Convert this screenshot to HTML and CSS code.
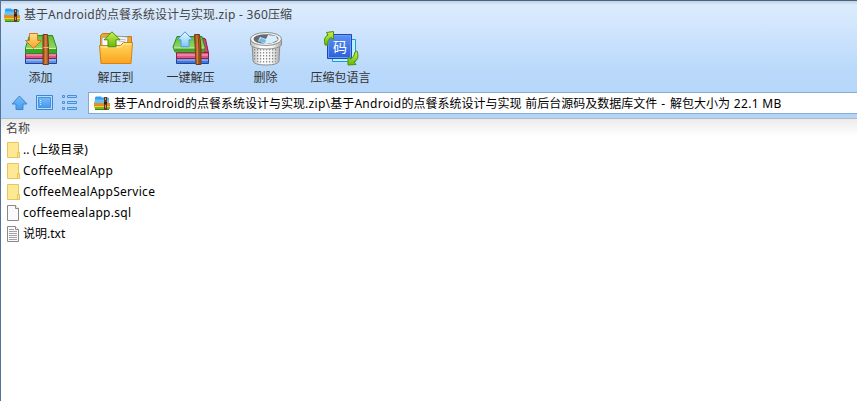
FILE: index.html
```html
<!DOCTYPE html>
<html lang="zh-CN">
<head>
    <meta charset="UTF-8">
    <title>360压缩</title>
    <link rel="stylesheet" href="styles.css">
</head>
<body>
    <svg class="defs" width="0" height="0">
        <defs>
            <linearGradient id="orange" x1="0" y1="0" x2="0" y2="1">
                <stop offset="0" stop-color="#ffe08a"/><stop offset="1" stop-color="#fba030"/>
            </linearGradient>
            <linearGradient id="folder" x1="0" y1="0" x2="0" y2="1">
                <stop offset="0" stop-color="#ffd95c"/><stop offset="1" stop-color="#fba31e"/>
            </linearGradient>
            <linearGradient id="green" x1="0" y1="0" x2="0" y2="1">
                <stop offset="0" stop-color="#5fbf35"/><stop offset="1" stop-color="#a5e07c"/>
            </linearGradient>
            <linearGradient id="lime" x1="0" y1="0" x2="0" y2="1">
                <stop offset="0" stop-color="#d0f04e"/><stop offset="1" stop-color="#64b80b"/>
            </linearGradient>
            <linearGradient id="belt" x1="0" y1="0" x2="1" y2="0">
                <stop offset="0" stop-color="#8a4517"/><stop offset=".5" stop-color="#d98643"/><stop offset="1" stop-color="#8a4517"/>
            </linearGradient>
            <linearGradient id="sky" x1="0" y1="0" x2="0" y2="1">
                <stop offset="0" stop-color="#e8f9ff"/><stop offset="1" stop-color="#7cc6fb"/>
            </linearGradient>
            <linearGradient id="blue" x1="0" y1="0" x2="0" y2="1">
                <stop offset="0" stop-color="#5b94f4"/><stop offset="1" stop-color="#2a5edb"/>
            </linearGradient>
            <linearGradient id="nav" x1="0" y1="0" x2="0" y2="1">
                <stop offset="0" stop-color="#73bdfb"/><stop offset="1" stop-color="#4a9aea"/>
            </linearGradient>
            <linearGradient id="metal" x1="0" y1="0" x2="1" y2="0">
                <stop offset="0" stop-color="#b8b8b8"/><stop offset=".35" stop-color="#ffffff"/><stop offset=".7" stop-color="#f4f4f4"/><stop offset="1" stop-color="#aaaaaa"/>
            </linearGradient>
            <pattern id="holes" width="3" height="3" patternUnits="userSpaceOnUse">
                <rect width="1.2" height="1.5" fill="#8a8a8a"/>
            </pattern>
            <symbol id="zip" viewBox="0 0 16 14">
                <path d="M1 3V1.5L2 .5h5l1 1h6l1 1V6H1z" fill="#35a3ec"/>
                <path d="M1 3.500h14V7H0z" fill="#62c4fa"/>
                <path d="M0 7h16v3.500H0z" fill="#f08a1c"/>
                <path d="M0 10.500h16V13H1z" fill="#6dbd24"/>
                <path d="M0 10h16v1H0z" fill="#f9c93d"/>
                <path d="M1 13h14v1H1z" fill="#3d8111"/>
                <path d="M10 1h3v13h-3z" fill="#69351f"/>
                <path d="M11 2h1v2h-1zm0 7h1v3h-1z" fill="#c79570"/>
                <path d="M10 6h3v2h-3z" fill="#352016"/>
            </symbol>
            <symbol id="dir" viewBox="0 0 13 16">
                <path d="M.5.5h11v10h1v5H.5z" fill="#fde893" stroke="#e7c65c"/>
                <path d="M10.500 15v-4.500h2v5h-2z" fill="#fde28a" stroke="#e7c65c"/>
            </symbol>
        </defs>
    </svg>

    <div class="window">
        <div class="chrome">
            <div class="titlebar">
                <svg width="16" height="14"><use href="#zip"/></svg>
                <span class="title">基于<span class="latin">Android</span>的点餐系统设计与实现<span class="latin">.zip - 360</span>压缩</span>
            </div>

            <div class="toolbar">
                <div class="tool">
                    <svg width="36" height="36" viewBox="0 0 36 36">
                        <path d="M2.500 27.500h31v5h-31z" fill="#5a92e6" stroke="#21449a"/>
                        <path d="M3 29h30" stroke="#b9d7ff"/>
                        <path d="M2.500 22.500h31v5h-31z" fill="#dc5482" stroke="#8e1c46"/>
                        <path d="M3 24h30" stroke="#f7b3cb"/>
                        <path d="M6.500 4.500h23l4 12v6h-31v-6z" fill="url(#green)" stroke="#2f8a1e"/>
                        <path d="M3 17h30v5H3z" fill="#3fa428"/>
                        <path d="M3 17.500h30" stroke="#c9f0ae"/>
                        <path d="M20 3.500h4.500l1 12v18h-5.500z" fill="url(#belt)" stroke="#7a3c10"/>
                        <path d="M20.500 16.500h5" stroke="#f0b47c"/>
                        <path d="M6.500 2.500h8v7h4l-8 8-8-8h4z" fill="url(#orange)" stroke="#d17a14"/>
                    </svg>
                    <span>添加</span>
                </div>
                <div class="tool">
                    <svg width="36" height="36" viewBox="0 0 36 36">
                        <path d="M2.500 4.500l2-2h8l2 3h19v13h-31z" fill="#eda42a" stroke="#c57a13"/>
                        <path d="M4 7l12-3 4 12H4z" fill="#fff" stroke="#aaa"/>
                        <path d="M17 5l13 1-1 12H16z" fill="#f7f7f7" stroke="#999"/>
                        <path d="M21 8l7 1M21 10l6 1" stroke="#bbb"/>
                        <path d="M1.500 14.500h21l3-3h9L33 32.500H3z" fill="url(#folder)" stroke="#d58316"/>
                        <path d="M3 16h20l3-3h7" fill="none" stroke="#ffefaa"/>
                        <path d="M14 .8l8 8h-4v7h-8v-7H6z" fill="url(#lime)" stroke="#4a900c"/>
                    </svg>
                    <span>解压到</span>
                </div>
                <div class="tool">
                    <svg width="38" height="36" viewBox="0 0 38 36">
                        <path d="M31 7l2.500 1 3 14v5H30z" fill="#d54471" stroke="#8e1c46"/>
                        <path d="M4.500 27.500h32v5h-32z" fill="#3f78dc" stroke="#21449a"/>
                        <path d="M5 29h31" stroke="#a9ccff"/>
                        <path d="M4.500 21.500h32v6h-32z" fill="#dc5482" stroke="#8e1c46"/>
                        <path d="M5 24h31" stroke="#f7b3cb"/>
                        <path d="M5 5.500h25l3 11-1 4.500H3l-2-5z" fill="url(#green)" stroke="#2f8a1e"/>
                        <path d="M1.500 17h31l-.5 3.500H3z" fill="#3fa428"/>
                        <path d="M2 17h30" stroke="#c9f0ae"/>
                        <path d="M22.500 3.500h5l1.500 13v17h-5z" fill="url(#belt)" stroke="#7a3c10"/>
                        <path d="M26 4l1 13v16" fill="none" stroke="#7a3c10"/>
                        <path d="M13 .8l7.500 8H17v7H9v-7H5.500z" fill="url(#sky)" stroke="#4a9ce8"/>
                    </svg>
                    <span>一键解压</span>
                </div>
                <div class="tool">
                    <svg width="36" height="36" viewBox="0 0 36 36">
                        <path d="M4 10l1 20q1 4 13 4t13-4l1-20z" fill="url(#metal)" stroke="#8d8d8d"/>
                        <path d="M6 16q12 5 24 0v14q-12 5-24 0z" fill="url(#holes)"/>
                        <path d="M2.500 8v6q3 4 15.500 4t15.500-4V8z" fill="url(#metal)" stroke="#8d8d8d"/>
                        <ellipse cx="18" cy="8" rx="15.500" ry="6.500" fill="#f5f5f5" stroke="#8d8d8d"/>
                        <ellipse cx="18" cy="8" rx="12.500" ry="4.800" fill="#626b71"/>
                        <path d="M10 10l2-4 6 2 2-4 8 1 2 4-6 3-7 1z" fill="#d8eefb"/>
                        <path d="M10 10l3-3 5 2-1 3-5-1z" fill="#73bae8"/>
                    </svg>
                    <span>删除</span>
                </div>
                <div class="tool">
                    <svg width="36" height="36" viewBox="0 0 36 36">
                        <path d="M9.500 8.500h23v22h-23z" fill="#c3f0ff" stroke="#129ce8"/>
                        <path d="M4.500 3.500h24v24h-24z" fill="url(#blue)" stroke="#1c49b5"/>
                        <path d="M5.500 4.500h22v22h-22z" fill="none" stroke="#6c9df5"/>
                        <text x="17" y="20.500" class="code-char">码</text>
                        <path d="M2 14Q0 6 5 4L3.500 1.500 10.500.500v8L8 6.500Q4 9 5 14z" fill="url(#lime)" stroke="#4a900c"/>
                        <path d="M34 20q3 8-3 11l2 2.500-8 .5v-8l2.500 2q4-2 4.500-7z" fill="url(#lime)" stroke="#4a900c"/>
                    </svg>
                    <span>压缩包语言</span>
                </div>
            </div>

            <div class="navbar">
                <div class="nav-icons">
                    <svg width="18" height="16" viewBox="0 0 18 16">
                        <path d="M9.500 1l7.500 8H13v5.500H6V9H2z" fill="url(#nav)" stroke="#3a86d6"/>
                    </svg>
                    <svg width="18" height="16" viewBox="0 0 18 16">
                        <path d="M.5.500h16v14H.5z" fill="#b9dcff" stroke="#3a86d6"/>
                        <path d="M2.500 2.500h12v10h-12z" fill="url(#nav)" stroke="#4a90dc"/>
                        <path d="M4 5h1v1H4zm0 2h1v1H4zm0 2h1v1H4z" fill="#d5edff"/>
                    </svg>
                    <svg width="16" height="16" viewBox="0 0 16 16">
                        <path d="M.5.500h2v2h-2zm0 6h2v2h-2zm0 6h2v2h-2zM5.500.500h9v2h-9zm0 6h9v2h-9zm0 6h9v2h-9z" fill="#a5d3ff" stroke="#4a8fd6"/>
                    </svg>
                </div>
                <div class="address">
                    <svg width="16" height="14"><use href="#zip"/></svg>
                    <span>基于<span class="latin">Android</span>的点餐系统设计与实现<span class="latin">.zip\</span>基于<span class="latin">Android</span>的点餐系统设计与实现<span class="space"> </span>前后台源码及数据库文件<span class="space"> - </span>解包大小为<span class="space"> </span><span class="latin">22.1 MB</span></span>
                </div>
            </div>
        </div>

        <div class="list-header">名称</div>
        <div class="files">
            <div class="file">
                <svg width="13" height="16"><use href="#dir"/></svg>
                <span>.. (上级目录)</span>
            </div>
            <div class="file">
                <svg width="13" height="16"><use href="#dir"/></svg>
                <span class="name">CoffeeMealApp</span>
            </div>
            <div class="file">
                <svg width="13" height="16"><use href="#dir"/></svg>
                <span class="name">CoffeeMealAppService</span>
            </div>
            <div class="file">
                <svg width="13" height="16" viewBox="0 0 13 16">
                    <path d="M.5.500h8l3 3v12H.5z" fill="#fafafa" stroke="#898989"/>
                    <path d="M8.500.500v3h3" fill="#fff" stroke="#898989"/>
                </svg>
                <span class="name">coffeemealapp.sql</span>
            </div>
            <div class="file">
                <svg width="13" height="16" viewBox="0 0 13 16">
                    <path d="M.5.500h8l3 3v12H.5z" fill="#fafafa" stroke="#898989"/>
                    <path d="M8.500.500v3h3" fill="#fff" stroke="#898989"/>
                    <path d="M2 3.500h5M2 5.500h8M2 7.500h8M2 9.500h8M2 11.500h8M2 13.500h8" stroke="#a3a3a3"/>
                </svg>
                <span>说明.txt</span>
            </div>
        </div>
    </div>
</body>
</html>
```

FILE: styles.css
```css
* {
    box-sizing: border-box;
}
body {
    margin: 0;
    background: #fff;
    font-family: "Noto Sans", "Noto Sans CJK SC", sans-serif;
    font-size: 12px;
    line-height: 18px;
    color: #000;
}
svg {
    display: block;
    flex: none;
}
span {
    white-space: pre;
}
.defs {
    position: absolute;
}
.window {
    height: 401px;
    border-left: 1px solid #537499;
    overflow: hidden;
}
.chrome {
    height: 119px;
    border-top: 1px solid #4a6685;
    border-bottom: 1px solid #b4b9bf;
    background: linear-gradient(#deedfd 0, #d0e5fd 28px, #b9d9fb 70px, #b3d5fa 100%);
}
.titlebar {
    display: flex;
    align-items: center;
    height: 27px;
    padding-left: 3px;
    gap: 4px;
    color: #444;
    background: linear-gradient(rgba(80, 100, 130, 0.2), rgba(80, 100, 130, 0) 4px);
}
.latin {
    letter-spacing: 0.3px;
}
.space {
    letter-spacing: 0.8px;
}
.toolbar {
    display: flex;
    height: 60px;
    padding-left: 2px;
}
.tool {
    display: flex;
    flex-direction: column;
    align-items: center;
    width: 75px;
    padding-top: 3px;
    color: #333;
}
.tool span {
    margin-top: 2px;
}
.code-char {
    font-size: 14px;
    fill: #fff;
    text-anchor: middle;
}
.navbar {
    display: flex;
    align-items: center;
    height: 30px;
}
.nav-icons {
    display: flex;
    gap: 8px;
    width: 87px;
    padding-left: 9px;
}
.address {
    display: flex;
    align-items: center;
    flex: 1;
    height: 22px;
    padding-left: 5px;
    gap: 4px;
    border: 1px solid #86a9ce;
    border-right: none;
    background: #fff;
}
.address > span {
    padding-top: 1px;
}
.list-header {
    height: 20px;
    padding-left: 5px;
    line-height: 20px;
    color: #444;
    background: linear-gradient(#ebebeb, #fff 17px);
}
.file {
    display: flex;
    align-items: center;
    height: 21px;
    padding-left: 6px;
    gap: 3px;
}
.name {
    letter-spacing: 0.28px;
}
```
